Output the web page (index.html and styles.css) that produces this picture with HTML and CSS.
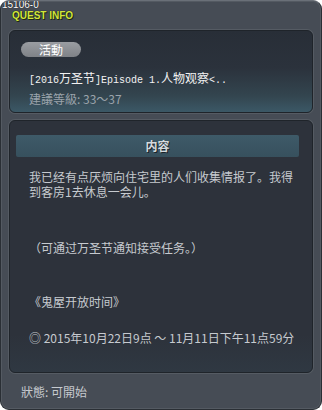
FILE: index.html
```html
<!DOCTYPE html>
<html lang="zh-CN">
<head>
    <meta charset="UTF-8">
    <meta name="viewport" content="width=device-width, initial-scale=1.0">
    <title>Quest Info</title>
    <link rel="stylesheet" href="styles.css">
</head>
<body>
    <div class="window">
        <div class="titlebar">
            <div class="quest-id">15106-0</div>
            <div class="window-title">QUEST INFO</div>
        </div>

        <div class="summary">
            <div class="badge">活動</div>
            <div class="quest-name"><span class="half">[2016</span>万圣节<span class="half">]Episode 1.</span>人物观察<span class="half">&lt;..</span></div>
            <div class="quest-level">建議等級: 33～37</div>
        </div>

        <div class="content">
            <div class="content-header">内容</div>
            <div class="content-body">
                <p class="line-first">我已经有点厌烦向住宅里的人们收集情报了。我得到客房1去休息一会儿。</p>
                <p class="line-note">（可通过万圣节通知接受任务。）</p>
                <p class="line-title">《鬼屋开放时间》</p>
                <p class="line-date">◎ 2015年10月22日9点 ～ 11月11日下午11点59分</p>
            </div>
        </div>

        <div class="status">狀態: 可開始</div>
    </div>
</body>
</html>
```

FILE: styles.css
```css
:root {
    --frame-color: #464c55;
    --panel-color: #2d323b;
    --text-color: #c6cacf;
}

body {
    margin: 0;
    padding: 0;
    background: #ffffff;
    font-family: "Noto Sans CJK SC", "Liberation Sans", sans-serif;
}

.window {
    width: 322px;
    height: 410px;
    box-sizing: border-box;
    display: flex;
    flex-direction: column;
    padding: 0 8px;
    background: var(--frame-color);
    border: 1px solid #2a2f35;
    border-top-color: #6a7078;
    border-radius: 9px;
    box-shadow: inset 0 0 0 1px #545a62;
    overflow: hidden;
}

.titlebar {
    height: 29px;
    flex-shrink: 0;
    margin-left: -7px;
    font-family: "Liberation Sans", sans-serif;
    font-size: 10px;
    line-height: 10px;
}

.quest-id {
    margin-top: -1px;
    color: #ffffff;
    text-shadow: 0 0 1px #000000;
}

.window-title {
    margin-top: 1px;
    padding-left: 10px;
    font-weight: bold;
    color: #d2e63c;
    text-shadow: 1px 1px 0 #1e2a10, 0 0 1px #000000;
}

/* 上方任务概要 */
.summary {
    height: 83px;
    flex-shrink: 0;
    box-sizing: border-box;
    padding: 11px 11px 0;
    border: 1px solid #1f242a;
    border-radius: 6px;
    box-shadow: 0 0 0 1px #555b63;
    background: linear-gradient(to bottom, #282e37 0%, #2b323c 45%, #33454f 80%, #3b5866 100%);
}

.badge {
    width: 60px;
    height: 15px;
    border-radius: 8px;
    background: linear-gradient(to bottom, #9a9da2, #7f8287);
    color: #ffffff;
    font-size: 12px;
    line-height: 15px;
    text-align: center;
}

.quest-name {
    margin-top: 12px;
    margin-left: 8px;
    color: #f2f2f2;
    font-size: 12px;
    line-height: 18px;
    white-space: nowrap;
}

.half {
    font-family: "Liberation Mono", monospace;
    font-size: 10px;
}

.quest-level {
    margin-left: 8px;
    color: #9ba3ab;
    font-size: 12px;
    line-height: 18px;
}

/* 任务内容 */
.content {
    height: 253px;
    flex-shrink: 0;
    box-sizing: border-box;
    margin-top: 7px;
    padding: 14px 13px 0 6px;
    border: 1px solid #1f242a;
    border-radius: 6px;
    box-shadow: 0 0 0 1px #555b63;
    background: linear-gradient(to bottom, var(--panel-color) 85%, #2f3842 100%);
}

.content-header {
    height: 22px;
    border-radius: 2px;
    background: linear-gradient(to bottom, #3e5a68, #37505d);
    color: #d6dade;
    font-size: 12px;
    font-weight: bold;
    line-height: 22px;
    text-align: center;
    text-shadow: 1px 1px 0 #1b2228;
}

.content-body {
    padding-left: 13px;
    color: var(--text-color);
    font-size: 12px;
    line-height: 15px;
}

.content-body p {
    margin: 0;
}

.line-first {
    margin-top: 12px !important;
}

.line-note {
    margin-top: 41px !important;
}

.line-title {
    margin-top: 39px !important;
}

.line-date {
    margin-top: 21px !important;
    white-space: nowrap;
}

.status {
    flex: 1;
    display: flex;
    align-items: center;
    padding-left: 12px;
    color: var(--text-color);
    font-size: 12px;
}
```
